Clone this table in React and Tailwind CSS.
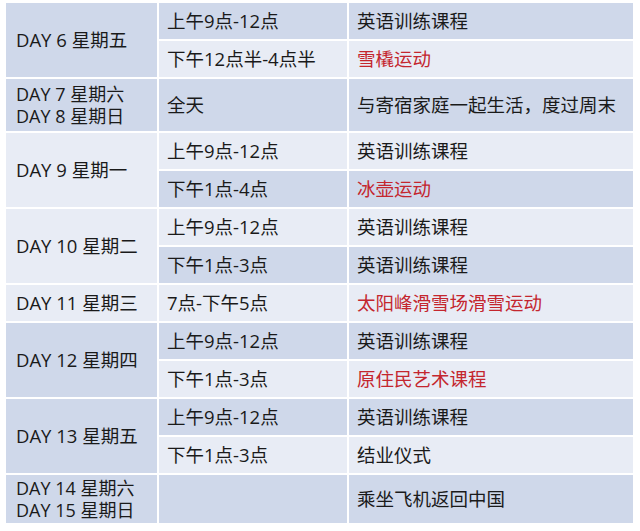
import React from 'react';

const DARK = 'bg-[#cfd8ea]';
const LIGHT = 'bg-[#e8ecf5]';

// each day group: label lines, then its time slots (one or two rows)
const schedule = [
  {
    day: ['DAY 6 星期五'],
    dark: true,
    slots: [
      { time: '上午9点-12点', what: '英语训练课程', dark: true },
      { time: '下午12点半-4点半', what: '雪橇运动', red: true, dark: false },
    ],
  },
  {
    day: ['DAY 7 星期六', 'DAY 8 星期日'],
    dark: true,
    tall: 'h-[52px]',
    slots: [{ time: '全天', what: '与寄宿家庭一起生活，度过周末', dark: true }],
  },
  {
    day: ['DAY 9 星期一'],
    dark: false,
    slots: [
      { time: '上午9点-12点', what: '英语训练课程', dark: false },
      { time: '下午1点-4点', what: '冰壶运动', red: true, dark: true },
    ],
  },
  {
    day: ['DAY 10 星期二'],
    dark: false,
    slots: [
      { time: '上午9点-12点', what: '英语训练课程', dark: false },
      { time: '下午1点-3点', what: '英语训练课程', dark: true },
    ],
  },
  {
    day: ['DAY 11 星期三'],
    dark: false,
    slots: [{ time: '7点-下午5点', what: '太阳峰滑雪场滑雪运动', red: true, dark: false }],
  },
  {
    day: ['DAY 12 星期四'],
    dark: true,
    slots: [
      { time: '上午9点-12点', what: '英语训练课程', dark: true },
      { time: '下午1点-3点', what: '原住民艺术课程', red: true, dark: false },
    ],
  },
  {
    day: ['DAY 13 星期五'],
    dark: true,
    slots: [
      { time: '上午9点-12点', what: '英语训练课程', dark: true },
      { time: '下午1点-3点', what: '结业仪式', dark: false },
    ],
  },
  {
    day: ['DAY 14 星期六', 'DAY 15 星期日'],
    dark: true,
    tall: 'h-[48px]',
    slots: [{ time: '', what: '乘坐飞机返回中国', dark: true }],
  },
];

const Cell = ({ dark, className = '', children }) => (
  <div className={`${dark ? DARK : LIGHT} flex flex-col justify-center whitespace-nowrap ${className}`}>{children}</div>
);

export default function App() {
  return (
    <div className="w-[640px] h-[531px] bg-white pl-[6px] pt-[3px] font-['Open_Sans','Noto_Sans_CJK_SC',sans-serif] text-[18.5px] text-[#1a1a1a]">
      <div className="grid grid-cols-[151px_188px_284px] gap-[2px] w-[627px]">
        {schedule.map((g, gi) => {
          const span = g.slots.length === 2 ? 'row-span-2' : '';
          return (
            <React.Fragment key={gi}>
              <Cell dark={g.dark} className={`${span} pl-[10px]`}>
                {g.day.map(line => (
                  <span key={line} className={g.day.length > 1 ? 'text-[18px] leading-[22px]' : ''}>
                    {line}
                  </span>
                ))}
              </Cell>
              {g.slots.map((s, si) => (
                <React.Fragment key={si}>
                  <Cell dark={s.dark} className={`${g.tall || 'h-[36px]'} pl-[8px]`}>
                    {s.time}
                  </Cell>
                  <Cell dark={s.dark} className={`${g.tall || 'h-[36px]'} pl-[8px] ${s.red ? 'text-[#c4262e]' : ''}`}>
                    {s.what}
                  </Cell>
                </React.Fragment>
              ))}
            </React.Fragment>
          );
        })}
      </div>
    </div>
  );
}
